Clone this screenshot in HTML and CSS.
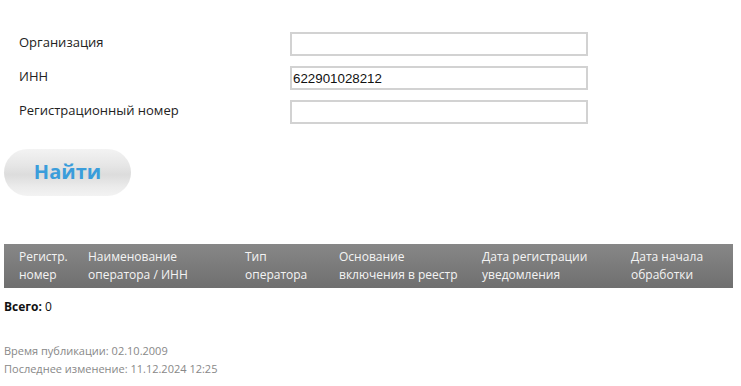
FILE: index.html
```html
<!DOCTYPE html>
<html lang="ru">
<head>
<meta charset="utf-8">
<title>Поиск</title>
<link rel="stylesheet" href="styles.css">
</head>
<body>
<form class="search">
  <div class="row">
    <label class="lbl">Организация</label>
    <input class="field" type="text" value="">
  </div>
  <div class="row">
    <label class="lbl">ИНН</label>
    <input class="field" type="text" value="622901028212">
  </div>
  <div class="row">
    <label class="lbl">Регистрационный номер</label>
    <input class="field" type="text" value="">
  </div>
  <button type="button" class="btn">Найти</button>
</form>

<div class="thead">
  <div class="th">Регистр.<br>номер</div>
  <div class="th">Наименование<br>оператора / ИНН</div>
  <div class="th">Тип<br>оператора</div>
  <div class="th">Основание<br>включения в реестр</div>
  <div class="th">Дата регистрации<br>уведомления</div>
  <div class="th">Дата начала<br>обработки</div>
</div>

<div class="total"><b>Всего:</b> 0</div>

<div class="meta">
  <div>Время публикации: 02.10.2009</div>
  <div>Последнее изменение: 11.12.2024 12:25</div>
</div>
</body>
</html>
```
FILE: styles.css
```css
* { box-sizing: border-box; }
body {
  margin: 0;
  padding: 0 4px;
  font-family: "Open Sans", sans-serif;
  color: #222;
  background: #fff;
}
.search {
  padding-top: 32px;
}
.row {
  display: grid;
  grid-template-columns: 271px 298px;
  margin-left: 15px;
  margin-bottom: 10px;
  align-items: start;
}
.lbl {
  font-size: 13px;
  line-height: 18px;
  padding-top: 1px;
  color: #222;
}
.field {
  width: 298px;
  height: 24px;
  margin: 0;
  border: 2px solid #d2d2d2;
  padding: 0 1px;
  font-family: "Liberation Sans", Arial, sans-serif;
  font-size: 13.333px;
  color: #111;
  outline: none;
}
.btn {
  display: block;
  margin-top: 25px;
  width: 127px;
  height: 47px;
  border: none;
  border-radius: 24px;
  background: linear-gradient(#f3f3f3 0%, #e6e6e6 35%, #dcdcdc 55%, #ebebeb 80%, #f3f3f3 100%);
  font-family: "Open Sans", sans-serif;
  font-weight: 700;
  font-size: 20px;
  color: #3a9ddb;
  padding: 0 0 2px 0;
  cursor: pointer;
}
.thead {
  margin-top: 48px;
  width: 729px;
  height: 44px;
  display: grid;
  grid-template-columns: 69px 157px 94px 143px 149px 117px;
  background: linear-gradient(#878787, #6f6f6f);
  color: #f4f4f4;
  font-size: 12px;
  line-height: 18px;
  padding-top: 4px;
}
.th {
  padding-left: 15px;
  white-space: nowrap;
}
.total {
  margin-top: 10px;
  font-size: 12px;
  line-height: 18px;
  color: #111;
}
.meta {
  margin-top: 26px;
  font-size: 11px;
  line-height: 18px;
  color: #888;
}
```
